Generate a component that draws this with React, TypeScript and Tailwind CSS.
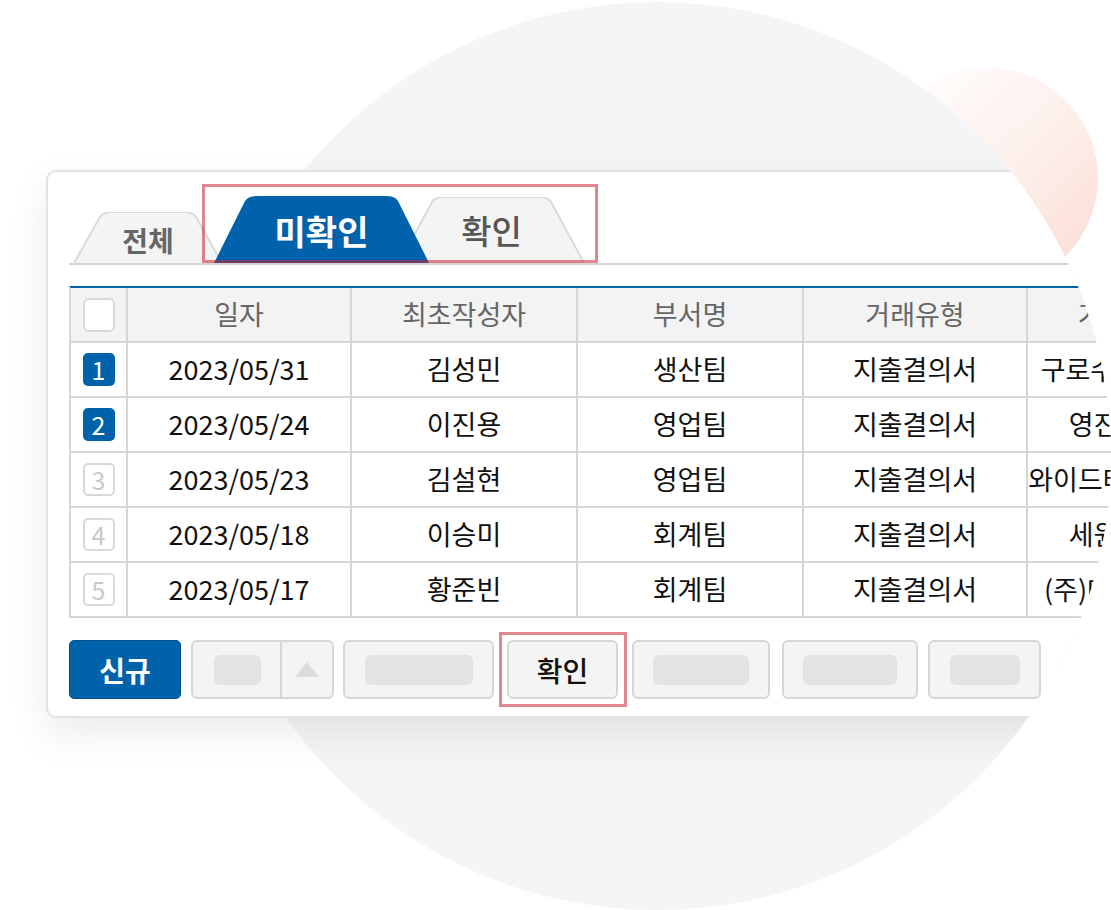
import React from 'react';

// ─── Data ───────────────────────────────────────────────────────────────────

interface Row {
  no: number;
  date: string;
  writer: string;
  dept: string;
  type: string;
  client: string;
  checked: boolean;
}

const rows: Row[] = [
  { no: 1, date: '2023/05/31', writer: '김성민', dept: '생산팀', type: '지출결의서', client: '구로수산유통센터', checked: true },
  { no: 2, date: '2023/05/24', writer: '이진용', dept: '영업팀', type: '지출결의서', client: '영진상사(주)', checked: true },
  { no: 3, date: '2023/05/23', writer: '김설현', dept: '영업팀', type: '지출결의서', client: '와이드테크놀로지스', checked: false },
  { no: 4, date: '2023/05/18', writer: '이승미', dept: '회계팀', type: '지출결의서', client: '세원상사(주)', checked: false },
  { no: 5, date: '2023/05/17', writer: '황준빈', dept: '회계팀', type: '지출결의서', client: '(주)대한정밀산업', checked: false },
];

const headers = ['일자', '최초작성자', '부서명', '거래유형', '거래처정보'];

const gridCols = 'grid grid-cols-[57px_224px_226px_226px_224px_226px]';

// ─── Tabs ───────────────────────────────────────────────────────────────────

const TabShape: React.FC<{ w: number; h: number; slope: number; fill: string; stroke?: string }> = ({ w, h, slope, fill, stroke }) => {
  const r = 9;
  const d = `M0,${h} L${slope - 3},${r - 4} Q${slope},0 ${slope + r},0 L${w - slope - r},0 Q${w - slope},0 ${w - slope + 3},${r - 4} L${w},${h}`;
  return (
    <svg className="absolute inset-0" width={w} height={h} viewBox={`0 0 ${w} ${h}`}>
      <path d={d} fill={fill} stroke={stroke ?? 'none'} strokeWidth={2} />
    </svg>
  );
};

const Tabs: React.FC = () => (
  <div className="relative flex h-[69px] items-end border-b-2 border-[#d4d4d4]">
    <div className="relative ml-[5px] flex h-[51px] w-[148px] shrink-0 items-center justify-center pt-[5px]">
      <TabShape w={148} h={51} slope={29} fill="#f4f4f4" stroke="#dadada" />
      <span className="relative text-[28px] font-semibold text-[#666]">전체</span>
    </div>
    <div className="relative z-10 -ml-[8px] flex h-[67px] w-[215px] shrink-0 items-center justify-center pt-[2px]">
      <TabShape w={215} h={67} slope={34} fill="#0062aa" />
      <span className="relative text-[34px] font-bold text-white">미확인</span>
    </div>
    <div className="relative -ml-[30px] flex h-[66px] w-[185px] shrink-0 items-center justify-center pt-[2px]">
      <TabShape w={185} h={66} slope={36} fill="#f4f4f4" stroke="#dadada" />
      <span className="relative text-[33px] font-medium text-[#555]">확인</span>
    </div>
    <div className="pointer-events-none absolute left-[133px] top-[-12px] z-20 h-[79px] w-[396px] border-[3px] border-[rgba(199,35,50,0.55)]" />
  </div>
);

// ─── Table ──────────────────────────────────────────────────────────────────

const Badge: React.FC<{ n: number; on: boolean }> = ({ n, on }) =>
  on ? (
    <span className="flex h-[33px] w-[32px] items-center justify-center rounded-[5px] bg-[#0062aa] text-[25px] text-white">{n}</span>
  ) : (
    <span className="flex h-[33px] w-[32px] items-center justify-center rounded-[5px] border-2 border-[#d9d9d9] bg-white text-[25px] text-[#c9c9c9]">{n}</span>
  );

const Table: React.FC = () => (
  <div className="w-[1185px] border-l-2 border-t-2 border-[#d6d6d6] border-t-[#0062aa]">
    <div className={`${gridCols} h-[55px] border-b-2 border-[#d6d6d6] bg-[#f3f3f3]`}>
      <div className="flex items-center justify-center border-r-2 border-[#d6d6d6]">
        <span className="h-[34px] w-[32px] rounded-[6px] border-2 border-[#d9d9d9] bg-white" />
      </div>
      {headers.map(h => (
        <div key={h} className="flex items-center justify-center overflow-hidden whitespace-nowrap border-r-2 border-[#d6d6d6] text-[27px] text-[#666]">
          {h}
        </div>
      ))}
    </div>
    {rows.map(r => (
      <div key={r.no} className={`${gridCols} h-[55px] border-b-2 border-[#d6d6d6] bg-white text-[27px] text-[#111]`}>
        <div className="flex items-center justify-center border-r-2 border-[#d6d6d6]">
          <Badge n={r.no} on={r.checked} />
        </div>
        <div className="flex items-center justify-center border-r-2 border-[#d6d6d6]">{r.date}</div>
        <div className="flex items-center justify-center border-r-2 border-[#d6d6d6]">{r.writer}</div>
        <div className="flex items-center justify-center border-r-2 border-[#d6d6d6]">{r.dept}</div>
        <div className="flex items-center justify-center border-r-2 border-[#d6d6d6]">{r.type}</div>
        <div className="flex items-center justify-center overflow-hidden whitespace-nowrap border-r-2 border-[#d6d6d6]">{r.client}</div>
      </div>
    ))}
  </div>
);

// ─── Buttons ────────────────────────────────────────────────────────────────

const GhostButton: React.FC<{ w: string; bar: string; className?: string }> = ({ w, bar, className }) => (
  <div className={`flex h-[59px] ${w} items-center justify-center rounded-[6px] border-2 border-[#d6d6d6] bg-[#f4f4f4] ${className ?? ''}`}>
    <span className={`h-[30px] ${bar} rounded-[6px] bg-[#e3e3e3]`} />
  </div>
);

const Buttons: React.FC = () => (
  <div className="flex items-center">
    <button className="flex h-[59px] w-[112px] items-center justify-center rounded-[5px] border border-[#00528f] bg-[#0062aa] text-[28px] font-bold text-white">
      신규
    </button>
    <div className="ml-[10px] flex h-[59px] w-[143px] rounded-[6px] border-2 border-[#d6d6d6] bg-[#f4f4f4]">
      <div className="flex w-[89px] items-center justify-center border-r-2 border-[#d6d6d6]">
        <span className="ml-[2px] h-[30px] w-[47px] rounded-[6px] bg-[#e3e3e3]" />
      </div>
      <div className="flex flex-1 items-center justify-center">
        <svg width="24" height="15" viewBox="0 0 24 15">
          <path d="M12 0 L24 15 H0 Z" fill="#dcdcdc" />
        </svg>
      </div>
    </div>
    <GhostButton w="w-[151px]" bar="w-[108px]" className="ml-[9px]" />
    <div className="relative ml-[13px]">
      <button className="flex h-[59px] w-[111px] items-center justify-center rounded-[6px] border-2 border-[#d6d6d6] bg-[#f4f4f4] text-[28px] font-medium text-[#111]">
        확인
      </button>
      <div className="pointer-events-none absolute left-[-8px] top-[-8px] h-[75px] w-[128px] border-[3px] border-[rgba(199,35,50,0.55)]" />
    </div>
    <GhostButton w="w-[138px]" bar="w-[96px]" className="ml-[14px]" />
    <GhostButton w="w-[136px]" bar="w-[94px]" className="ml-[12px]" />
    <GhostButton w="w-[113px]" bar="w-[70px]" className="ml-[10px]" />
  </div>
);

// ─── Page ───────────────────────────────────────────────────────────────────

export default function App() {
  return (
    <div className="relative h-[910px] w-[1111px] overflow-hidden bg-white font-['Noto_Sans_CJK_KR','Noto_Sans',sans-serif]">
      <div className="absolute left-[878px] top-[68px] h-[220px] w-[220px] rounded-full bg-linear-to-br from-white via-[#fdf1ed] to-[#fbdad1]" />
      <div className="absolute left-[203px] top-[2px] h-[908px] w-[908px] rounded-full bg-[#f4f5f7]" />

      <div className="relative h-full pl-[46px] pt-[170px] [clip-path:path('M0,0H657V2A454,454,0,0,1,657,910H0Z')]">
        <div className="w-[1100px] overflow-hidden rounded-[10px] border-2 border-[#e3e3e3] bg-white pb-[17px] pl-[21px] pt-[24px] shadow-[0_16px_40px_rgba(0,0,0,0.08)]">
          <Tabs />
          <div className="mt-[21px]">
            <Table />
          </div>
          <div className="mt-[22px]">
            <Buttons />
          </div>
        </div>
      </div>
    </div>
  );
}
